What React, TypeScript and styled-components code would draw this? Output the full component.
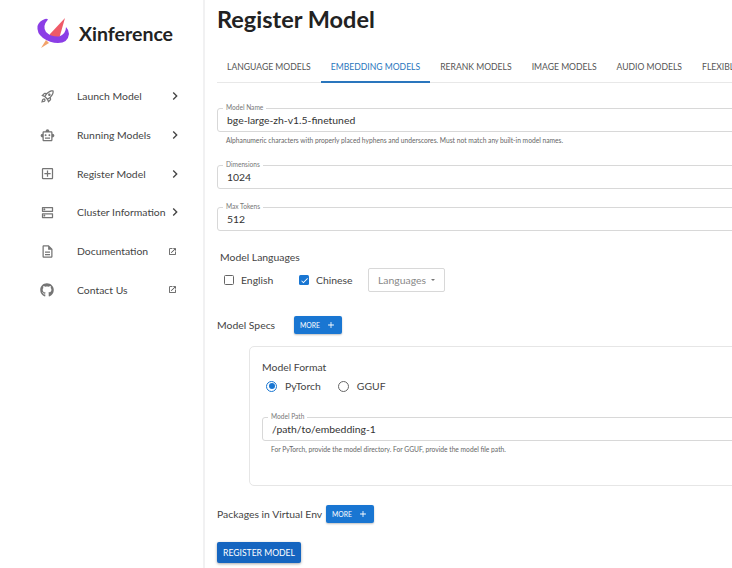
import React from 'react';
import styled, { createGlobalStyle } from 'styled-components';
import { FaGithub } from 'react-icons/fa';
import {
  MdAdd,
  MdCheck,
  MdChevronRight,
  MdOpenInNew,
  MdOutlineAddBox,
  MdOutlineDescription,
  MdOutlineDns,
  MdOutlineRocketLaunch,
  MdOutlineSmartToy,
} from 'react-icons/md';

const GlobalStyle = createGlobalStyle`
  html, body {
    margin: 0;
    padding: 0;
    width: 732px;
    height: 568px;
    overflow: hidden;
    background: #fff;
  }
  * { box-sizing: border-box; }
  body {
    font-family: Lato, "Noto Sans", sans-serif;
    color: #333;
  }
`;

const Page = styled.div`
  display: flex;
  width: 732px;
  height: 568px;
  overflow: hidden;
`;

const Sidebar = styled.aside`
  flex: 0 0 205px;
  height: 568px;
  border-right: 2px solid #f1f1f2;
`;

const Brand = styled.div`
  display: flex;
  align-items: center;
  height: 48px;
  margin-top: 9px;
  padding-left: 36px;
  gap: 9px;
  font-size: 19.5px;
  font-weight: 700;
  color: #222;
`;

const Nav = styled.nav`
  display: flex;
  flex-direction: column;
  margin-top: 20px;
`;

const NavRow = styled.div`
  display: flex;
  align-items: center;
  height: 38.7px;
  padding-left: 39px;
  font-size: 10.4px;
  color: #444;
`;

const NavIcon = styled.span`
  display: flex;
  justify-content: center;
  width: 16px;
  margin-right: 22px;
  color: #757575;
`;

const NavLabel = styled.span`
  flex: 1;
  white-space: nowrap;
`;

const NavEnd = styled.span<{ $external?: boolean }>`
  display: flex;
  margin-right: ${(p) => (p.$external ? '26px' : '20px')};
  color: #444;
`;

const Main = styled.main`
  flex: 1;
  min-width: 0;
  padding-left: 12px;
`;

const Title = styled.h1`
  margin: 0;
  height: 49px;
  padding-top: 2px;
  font-size: 23.5px;
  line-height: 34px;
  font-weight: 700;
  color: #222;
`;

const Tabs = styled.div`
  display: flex;
  height: 34px;
  width: 530px;
  border-bottom: 1px solid #e8e8e8;
`;

const Tab = styled.div<{ $active?: boolean }>`
  display: flex;
  align-items: center;
  height: 34px;
  padding: 4px 10px 0;
  font-size: 8.6px;
  white-space: nowrap;
  color: ${(p) => (p.$active ? '#2a76bd' : '#555')};
  border-bottom: 2px solid ${(p) => (p.$active ? '#2a76bd' : 'transparent')};
`;

const Field = styled.div<{ $top: number; $width?: number }>`
  position: relative;
  width: ${(p) => p.$width ?? 530}px;
  height: 24px;
  margin-top: ${(p) => p.$top}px;
  padding-left: 9px;
  border: 1px solid #d8d8d8;
  border-radius: 3px;
  font-size: 10.4px;
  line-height: 22px;
  color: #333;
`;

const FieldLabel = styled.span`
  position: absolute;
  top: -6px;
  left: 5px;
  padding: 0 3px;
  background: #fff;
  font-size: 6.6px;
  line-height: 9px;
  color: #777;
`;

const Help = styled.div`
  margin: 4px 0 0 9px;
  font-size: 6.7px;
  line-height: 9px;
  color: #666;
`;

const SectionTitle = styled.div<{ $left?: number; $top?: number }>`
  margin-left: ${(p) => p.$left ?? 0}px;
  margin-top: ${(p) => p.$top ?? 0}px;
  font-size: 10.4px;
  line-height: 14px;
  color: #444;
`;

const LanguageRow = styled.div`
  display: flex;
  align-items: center;
  height: 24px;
  margin-top: 4px;
  padding-left: 7px;
  font-size: 10.4px;
  color: #444;
`;

const Box = styled.span<{ $checked?: boolean }>`
  display: flex;
  align-items: center;
  justify-content: center;
  width: 10px;
  height: 10px;
  margin-right: 7px;
  border-radius: 1.5px;
  border: ${(p) => (p.$checked ? 'none' : '1px solid #666')};
  background: ${(p) => (p.$checked ? '#1976d2' : '#fff')};
  color: #fff;
`;

const CheckLabel = styled.span<{ $width: number }>`
  width: ${(p) => p.$width}px;
`;

const Select = styled.div`
  display: flex;
  align-items: center;
  justify-content: space-between;
  width: 77px;
  height: 24px;
  padding: 0 9px;
  border: 1px solid #d8d8d8;
  border-radius: 2px;
  color: #888;
`;

const Caret = styled.span`
  width: 0;
  height: 0;
  border-left: 2.5px solid transparent;
  border-right: 2.5px solid transparent;
  border-top: 2.5px solid #777;
`;

const MoreRow = styled.div<{ $top: number; $labelWidth: number }>`
  display: flex;
  align-items: center;
  height: 18px;
  margin-top: ${(p) => p.$top}px;
  font-size: 10.4px;
  color: #444;
`;

const MoreLabel = styled.span<{ $width: number }>`
  width: ${(p) => p.$width}px;
  white-space: nowrap;
`;

const MoreButton = styled.div`
  display: flex;
  align-items: center;
  justify-content: center;
  gap: 6px;
  width: 48px;
  height: 18px;
  border-radius: 2px;
  background: #1976d2;
  color: #fff;
  font-size: 6.8px;
  box-shadow: 0 1px 2px rgba(0, 0, 0, 0.25);
`;

const SpecCard = styled.div`
  width: 500px;
  height: 140px;
  margin: 12px 0 0 32px;
  padding: 13px 0 0 12px;
  border: 1px solid #e6e6e6;
  border-radius: 5px;
`;

const RadioRow = styled.div`
  display: flex;
  align-items: center;
  height: 18px;
  margin-top: 3px;
  padding-left: 4px;
  font-size: 10.4px;
  color: #444;
`;

const Radio = styled.span<{ $on?: boolean }>`
  display: flex;
  align-items: center;
  justify-content: center;
  width: 11px;
  height: 11px;
  margin-right: 8px;
  border-radius: 50%;
  border: 1px solid ${(p) => (p.$on ? '#1976d2' : '#666')};
  &::after {
    content: '';
    width: 6px;
    height: 6px;
    border-radius: 50%;
    background: ${(p) => (p.$on ? '#1976d2' : 'transparent')};
  }
`;

const RadioLabel = styled.span`
  margin-right: 17px;
`;

const SubmitButton = styled.div`
  display: flex;
  align-items: center;
  justify-content: center;
  width: 84px;
  height: 21px;
  margin-top: 19px;
  border-radius: 2px;
  background: #1565c0;
  color: #fff;
  font-size: 8.6px;
  box-shadow: 0 1px 3px rgba(0, 0, 0, 0.35);
`;

const Logo = () => (
  <svg width="34" height="32" viewBox="0 0 34 32">
    <path d="M5 31 L10 23 L13 26 Z" fill="#f2a36b" />
    <path d="M29 1 L23 22 Q19 25 15 23 Q13 20 14 17 Z" fill="#ef5a68" />
    <path
      d="M9 2 Q3 4 1.500 9 Q0.500 16 7 21 Q14 26 22 26 Q32 26 33 17 Q33 13 30 10 Q30 17 23 19.500 Q15 20 10 15 Q6 9 12 2.500 Q11 1.500 9 2 Z"
      fill="#8b3ee6"
    />
  </svg>
);

const navItems = [
  { label: 'Launch Model', icon: <MdOutlineRocketLaunch size={15} /> },
  { label: 'Running Models', icon: <MdOutlineSmartToy size={15} /> },
  { label: 'Register Model', icon: <MdOutlineAddBox size={15} /> },
  { label: 'Cluster Information', icon: <MdOutlineDns size={15} /> },
  { label: 'Documentation', icon: <MdOutlineDescription size={15} />, external: true },
  { label: 'Contact Us', icon: <FaGithub size={14} />, external: true },
];

const tabs = ['LANGUAGE MODELS', 'EMBEDDING MODELS', 'RERANK MODELS', 'IMAGE MODELS', 'AUDIO MODELS', 'FLEXIBLE MODELS'];

const App: React.FC = () => (
  <>
    <GlobalStyle />
    <Page>
      <Sidebar>
        <Brand>
          <Logo />
          Xinference
        </Brand>
        <Nav>
          {navItems.map((item) => (
            <NavRow key={item.label}>
              <NavIcon>{item.icon}</NavIcon>
              <NavLabel>{item.label}</NavLabel>
              <NavEnd $external={item.external}>
                {item.external ? <MdOpenInNew size={9} /> : <MdChevronRight size={16} />}
              </NavEnd>
            </NavRow>
          ))}
        </Nav>
      </Sidebar>
      <Main>
        <Title>Register Model</Title>
        <Tabs>
          {tabs.map((t) => (
            <Tab key={t} $active={t === 'EMBEDDING MODELS'}>
              {t}
            </Tab>
          ))}
        </Tabs>
        <Field $top={25}>
          <FieldLabel>Model Name</FieldLabel>
          bge-large-zh-v1.5-finetuned
        </Field>
        <Help>Alphanumeric characters with properly placed hyphens and underscores. Must not match any built-in model names.</Help>
        <Field $top={20}>
          <FieldLabel>Dimensions</FieldLabel>
          1024
        </Field>
        <Field $top={18}>
          <FieldLabel>Max Tokens</FieldLabel>
          512
        </Field>
        <SectionTitle $left={3} $top={19}>
          Model Languages
        </SectionTitle>
        <LanguageRow>
          <Box />
          <CheckLabel $width={58}>English</CheckLabel>
          <Box $checked>
            <MdCheck size={9} />
          </Box>
          <CheckLabel $width={52}>Chinese</CheckLabel>
          <Select>
            Languages
            <Caret />
          </Select>
        </LanguageRow>
        <MoreRow $top={24} $labelWidth={77}>
          <MoreLabel $width={77}>Model Specs</MoreLabel>
          <MoreButton>
            MORE
            <MdAdd size={10} />
          </MoreButton>
        </MoreRow>
        <SpecCard>
          <SectionTitle>Model Format</SectionTitle>
          <RadioRow>
            <Radio $on />
            <RadioLabel>PyTorch</RadioLabel>
            <Radio />
            GGUF
          </RadioRow>
          <Field $top={22} $width={480}>
            <FieldLabel>Model Path</FieldLabel>
            /path/to/embedding-1
          </Field>
          <Help>For PyTorch, provide the model directory. For GGUF, provide the model file path.</Help>
        </SpecCard>
        <MoreRow $top={19} $labelWidth={109}>
          <MoreLabel $width={109}>Packages in Virtual Env</MoreLabel>
          <MoreButton>
            MORE
            <MdAdd size={10} />
          </MoreButton>
        </MoreRow>
        <SubmitButton>REGISTER MODEL</SubmitButton>
      </Main>
    </Page>
  </>
);

export default App;
